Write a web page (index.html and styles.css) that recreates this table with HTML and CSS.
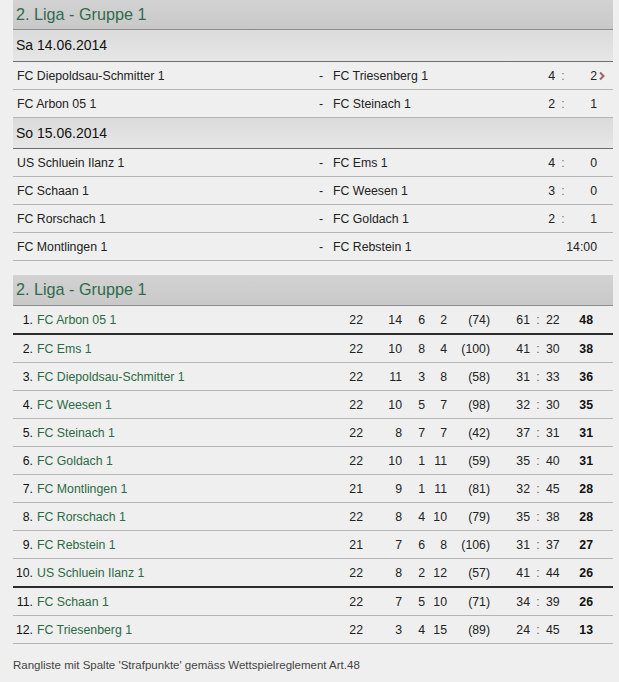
FILE: index.html
```html
<!DOCTYPE html>
<html lang="de">
<head>
<meta charset="utf-8">
<title>2. Liga - Gruppe 1</title>
<link rel="stylesheet" href="styles.css">
</head>
<body>
<div class="wrap">
  <section class="games">
    <div class="head">2. Liga - Gruppe 1</div>
    <div class="date">Sa 14.06.2014</div>
    <div class="match">
      <span class="home">FC Diepoldsau-Schmitter 1</span><span class="dash">-</span><span class="away">FC Triesenberg 1</span>
      <span class="sh">4</span><span class="sc">:</span><span class="sa">2</span>
      <span class="more"><svg width="8" height="10" viewBox="0 0 8 10"><path d="M2 1.5 L5.5 5 L2 8.5" fill="none" stroke="#a0606c" stroke-width="2"/></svg></span>
    </div>
    <div class="match">
      <span class="home">FC Arbon 05 1</span><span class="dash">-</span><span class="away">FC Steinach 1</span>
      <span class="sh">2</span><span class="sc">:</span><span class="sa">1</span>
    </div>
    <div class="date date2">So 15.06.2014</div>
    <div class="match">
      <span class="home">US Schluein Ilanz 1</span><span class="dash">-</span><span class="away">FC Ems 1</span>
      <span class="sh">4</span><span class="sc">:</span><span class="sa">0</span>
    </div>
    <div class="match">
      <span class="home">FC Schaan 1</span><span class="dash">-</span><span class="away">FC Weesen 1</span>
      <span class="sh">3</span><span class="sc">:</span><span class="sa">0</span>
    </div>
    <div class="match">
      <span class="home">FC Rorschach 1</span><span class="dash">-</span><span class="away">FC Goldach 1</span>
      <span class="sh">2</span><span class="sc">:</span><span class="sa">1</span>
    </div>
    <div class="match">
      <span class="home">FC Montlingen 1</span><span class="dash">-</span><span class="away">FC Rebstein 1</span>
      <span class="time">14:00</span>
    </div>
  </section>

  <section class="table">
    <div class="head">2. Liga - Gruppe 1</div>
    <div class="row thick"><span class="rk">1.</span><span class="nm">FC Arbon 05 1</span><span class="n">22</span><span class="n">14</span><span class="n">6</span><span class="n">2</span><span class="n">(74)</span><span class="n">61</span><span class="c">:</span><span class="l">22</span><span class="p">48</span></div>
    <div class="row"><span class="rk">2.</span><span class="nm">FC Ems 1</span><span class="n">22</span><span class="n">10</span><span class="n">8</span><span class="n">4</span><span class="n">(100)</span><span class="n">41</span><span class="c">:</span><span class="l">30</span><span class="p">38</span></div>
    <div class="row"><span class="rk">3.</span><span class="nm">FC Diepoldsau-Schmitter 1</span><span class="n">22</span><span class="n">11</span><span class="n">3</span><span class="n">8</span><span class="n">(58)</span><span class="n">31</span><span class="c">:</span><span class="l">33</span><span class="p">36</span></div>
    <div class="row"><span class="rk">4.</span><span class="nm">FC Weesen 1</span><span class="n">22</span><span class="n">10</span><span class="n">5</span><span class="n">7</span><span class="n">(98)</span><span class="n">32</span><span class="c">:</span><span class="l">30</span><span class="p">35</span></div>
    <div class="row"><span class="rk">5.</span><span class="nm">FC Steinach 1</span><span class="n">22</span><span class="n">8</span><span class="n">7</span><span class="n">7</span><span class="n">(42)</span><span class="n">37</span><span class="c">:</span><span class="l">31</span><span class="p">31</span></div>
    <div class="row"><span class="rk">6.</span><span class="nm">FC Goldach 1</span><span class="n">22</span><span class="n">10</span><span class="n">1</span><span class="n">11</span><span class="n">(59)</span><span class="n">35</span><span class="c">:</span><span class="l">40</span><span class="p">31</span></div>
    <div class="row"><span class="rk">7.</span><span class="nm">FC Montlingen 1</span><span class="n">21</span><span class="n">9</span><span class="n">1</span><span class="n">11</span><span class="n">(81)</span><span class="n">32</span><span class="c">:</span><span class="l">45</span><span class="p">28</span></div>
    <div class="row"><span class="rk">8.</span><span class="nm">FC Rorschach 1</span><span class="n">22</span><span class="n">8</span><span class="n">4</span><span class="n">10</span><span class="n">(79)</span><span class="n">35</span><span class="c">:</span><span class="l">38</span><span class="p">28</span></div>
    <div class="row"><span class="rk">9.</span><span class="nm">FC Rebstein 1</span><span class="n">21</span><span class="n">7</span><span class="n">6</span><span class="n">8</span><span class="n">(106)</span><span class="n">31</span><span class="c">:</span><span class="l">37</span><span class="p">27</span></div>
    <div class="row thick"><span class="rk">10.</span><span class="nm">US Schluein Ilanz 1</span><span class="n">22</span><span class="n">8</span><span class="n">2</span><span class="n">12</span><span class="n">(57)</span><span class="n">41</span><span class="c">:</span><span class="l">44</span><span class="p">26</span></div>
    <div class="row"><span class="rk">11.</span><span class="nm">FC Schaan 1</span><span class="n">22</span><span class="n">7</span><span class="n">5</span><span class="n">10</span><span class="n">(71)</span><span class="n">34</span><span class="c">:</span><span class="l">39</span><span class="p">26</span></div>
    <div class="row"><span class="rk">12.</span><span class="nm">FC Triesenberg 1</span><span class="n">22</span><span class="n">3</span><span class="n">4</span><span class="n">15</span><span class="n">(89)</span><span class="n">24</span><span class="c">:</span><span class="l">45</span><span class="p">13</span></div>
  </section>

  <p class="note">Rangliste mit Spalte 'Strafpunkte' gemäss Wettspielreglement Art.48</p>
</div>
</body>
</html>
```

FILE: styles.css
```css
html, body {
  margin: 0;
  padding: 0;
  background: #efefef;
}
body {
  font-family: "Liberation Sans", Arial, sans-serif;
  font-size: 12.3px;
  color: #222;
}
.wrap {
  width: 600px;
  margin-left: 13px;
}
.head {
  height: 29px;
  line-height: 29px;
  background: linear-gradient(#d2d2d2, #c9c9c9);
  border-bottom: 1px solid #8e8e8e;
  color: #2f6b4c;
  font-size: 16.2px;
  padding-left: 3px;
}
.date {
  height: 31px;
  line-height: 31px;
  background: linear-gradient(#dbdbdb, #e6e6e6);
  border-bottom: 1px solid #6e6e6e;
  font-size: 14px;
  color: #111;
  padding-left: 3px;
}
.date2 {
  height: 30px;
  line-height: 30px;
}
.match {
  display: grid;
  grid-template-columns: 301px 15px 1fr 22px 16px 26px 16px;
  height: 27px;
  line-height: 28px;
  border-bottom: 1px solid #b5b5b5;
  padding-left: 4px;
}
.dash { text-align: left; padding-left: 1px; }
.sh { text-align: right; }
.sc { text-align: center; color: #777; }
.sa { text-align: right; }
.time { grid-column: 4 / 7; text-align: right; }
.more { display: flex; align-items: center; padding-left: 1px; }
.more svg { display: block; }

.table { margin-top: 14px; }
.table .head { height: 30px; line-height: 29px; }
.row {
  display: grid;
  grid-template-columns: 20px 300px 30px 39px 23px 22px 43px 40px 16px 26px 21px 20px;
  height: 27px;
  line-height: 28px;
  border-bottom: 1px solid #b5b5b5;
}
.row.thick {
  border-bottom: 2px solid #2c2c2c;
}
.rk { text-align: right; color: #111; }
.nm { padding-left: 4px; color: #2b6a44; white-space: nowrap; }
.n { text-align: right; }
.c { text-align: center; color: #666; }
.l { text-align: left; }
.p { text-align: right; font-weight: bold; color: #111; }
.note {
  margin: 14px 0 0 0;
  line-height: 14px;
  font-size: 11.5px;
  color: #444;
}
```
